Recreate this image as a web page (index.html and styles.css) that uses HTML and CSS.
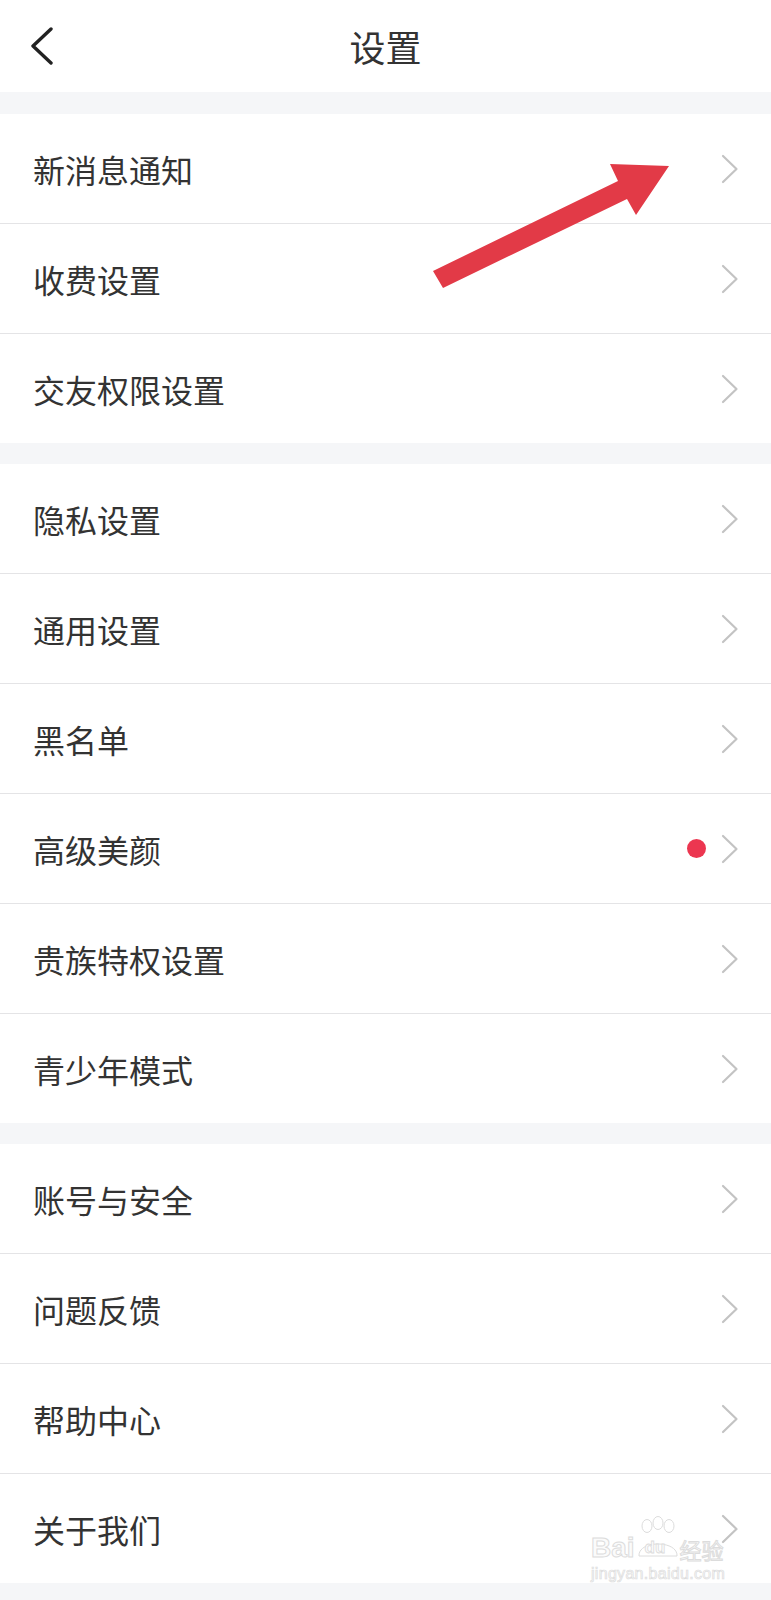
FILE: index.html
```html
<!DOCTYPE html>
<html lang="zh-CN">
<head>
<meta charset="utf-8">
<title>设置</title>
<link rel="stylesheet" href="styles.css">
</head>
<body>
<div class="page">
  <header class="nav">
    <div class="nav-left">
      <svg class="back" width="24" height="38" viewBox="0 0 24 38"><polyline points="21,2 3,19 21,36" fill="none" stroke="#222" stroke-width="3.4" stroke-linecap="round" stroke-linejoin="round"/></svg>
    </div>
    <h1 class="title">设置</h1>
    <div class="nav-right"></div>
  </header>

  <ul class="group first">
    <li class="row"><span class="label">新消息通知</span><span class="right"><svg class="chev" width="18" height="30" viewBox="0 0 18 30"><polyline points="2,2 15.5,15 2,28" fill="none" stroke="#c3c3c3" stroke-width="2.2" stroke-linecap="round" stroke-linejoin="round"/></svg></span></li>
    <li class="row"><span class="label">收费设置</span><span class="right"><svg class="chev" width="18" height="30" viewBox="0 0 18 30"><polyline points="2,2 15.5,15 2,28" fill="none" stroke="#c3c3c3" stroke-width="2.2" stroke-linecap="round" stroke-linejoin="round"/></svg></span></li>
    <li class="row"><span class="label">交友权限设置</span><span class="right"><svg class="chev" width="18" height="30" viewBox="0 0 18 30"><polyline points="2,2 15.5,15 2,28" fill="none" stroke="#c3c3c3" stroke-width="2.2" stroke-linecap="round" stroke-linejoin="round"/></svg></span></li>
  </ul>

  <ul class="group">
    <li class="row"><span class="label">隐私设置</span><span class="right"><svg class="chev" width="18" height="30" viewBox="0 0 18 30"><polyline points="2,2 15.5,15 2,28" fill="none" stroke="#c3c3c3" stroke-width="2.2" stroke-linecap="round" stroke-linejoin="round"/></svg></span></li>
    <li class="row"><span class="label">通用设置</span><span class="right"><svg class="chev" width="18" height="30" viewBox="0 0 18 30"><polyline points="2,2 15.5,15 2,28" fill="none" stroke="#c3c3c3" stroke-width="2.2" stroke-linecap="round" stroke-linejoin="round"/></svg></span></li>
    <li class="row"><span class="label">黑名单</span><span class="right"><svg class="chev" width="18" height="30" viewBox="0 0 18 30"><polyline points="2,2 15.5,15 2,28" fill="none" stroke="#c3c3c3" stroke-width="2.2" stroke-linecap="round" stroke-linejoin="round"/></svg></span></li>
    <li class="row"><span class="label">高级美颜</span><span class="right"><span class="dot"></span><svg class="chev" width="18" height="30" viewBox="0 0 18 30"><polyline points="2,2 15.5,15 2,28" fill="none" stroke="#c3c3c3" stroke-width="2.2" stroke-linecap="round" stroke-linejoin="round"/></svg></span></li>
    <li class="row"><span class="label">贵族特权设置</span><span class="right"><svg class="chev" width="18" height="30" viewBox="0 0 18 30"><polyline points="2,2 15.5,15 2,28" fill="none" stroke="#c3c3c3" stroke-width="2.2" stroke-linecap="round" stroke-linejoin="round"/></svg></span></li>
    <li class="row"><span class="label">青少年模式</span><span class="right"><svg class="chev" width="18" height="30" viewBox="0 0 18 30"><polyline points="2,2 15.5,15 2,28" fill="none" stroke="#c3c3c3" stroke-width="2.2" stroke-linecap="round" stroke-linejoin="round"/></svg></span></li>
  </ul>

  <ul class="group">
    <li class="row"><span class="label">账号与安全</span><span class="right"><svg class="chev" width="18" height="30" viewBox="0 0 18 30"><polyline points="2,2 15.5,15 2,28" fill="none" stroke="#c3c3c3" stroke-width="2.2" stroke-linecap="round" stroke-linejoin="round"/></svg></span></li>
    <li class="row"><span class="label">问题反馈</span><span class="right"><svg class="chev" width="18" height="30" viewBox="0 0 18 30"><polyline points="2,2 15.5,15 2,28" fill="none" stroke="#c3c3c3" stroke-width="2.2" stroke-linecap="round" stroke-linejoin="round"/></svg></span></li>
    <li class="row"><span class="label">帮助中心</span><span class="right"><svg class="chev" width="18" height="30" viewBox="0 0 18 30"><polyline points="2,2 15.5,15 2,28" fill="none" stroke="#c3c3c3" stroke-width="2.2" stroke-linecap="round" stroke-linejoin="round"/></svg></span></li>
    <li class="row"><span class="label">关于我们</span><span class="right"><svg class="chev" width="18" height="30" viewBox="0 0 18 30"><polyline points="2,2 15.5,15 2,28" fill="none" stroke="#c3c3c3" stroke-width="2.2" stroke-linecap="round" stroke-linejoin="round"/></svg></span></li>
  </ul>

  <svg class="annot" width="771" height="300" viewBox="0 0 771 300">
    <polygon points="443,288 433,271 618,181 610,164 669,166 636,215 627,199" fill="#e23a47"/>
  </svg>

  <div class="watermark">
    <div class="wm-top"><span class="wm-bai">Bai</span><span class="wm-paw"><svg width="44" height="42" viewBox="0 0 44 42"><ellipse cx="11" cy="10" rx="5" ry="6.5" fill="none" stroke="#dcdcdc" stroke-width="1"/><ellipse cx="22" cy="7" rx="5" ry="6.5" fill="none" stroke="#dcdcdc" stroke-width="1"/><ellipse cx="33" cy="10" rx="5" ry="6.5" fill="none" stroke="#dcdcdc" stroke-width="1"/><path d="M3 40 C2 24 42 24 41 40 Z" fill="none" stroke="#dcdcdc" stroke-width="1"/></svg><span class="wm-du">du</span></span><span class="wm-jy">经验</span></div>
    <div class="wm-url">jingyan.baidu.com</div>
  </div>
</div>
</body>
</html>
```

FILE: styles.css
```css
* { box-sizing: border-box; }

html, body {
  margin: 0;
  padding: 0;
}

body {
  background: #f5f6f8;
  font-family: "Noto Sans CJK SC", "Noto Sans", sans-serif;
  color: #333333;
}

.page {
  position: relative;
  width: 771px;
  min-height: 1600px;
  background: #f5f6f8;
  overflow: hidden;
}

.nav {
  height: 92px;
  background: #ffffff;
  display: grid;
  grid-template-columns: 1fr auto 1fr;
  align-items: center;
}

.nav-left {
  display: flex;
  align-items: center;
  padding-left: 30px;
}

.back { display: block; }

.title {
  margin: 0;
  font-size: 36px;
  font-weight: 400;
  color: #333333;
  line-height: 1;
  letter-spacing: 0;
}

.group {
  list-style: none;
  margin: 21px 0 0;
  padding: 0;
  background: #ffffff;
}

.group.first { margin-top: 22px; }

.row {
  height: 110px;
  display: flex;
  align-items: center;
  justify-content: space-between;
  padding: 0 32px 0 33px;
  border-bottom: 1px solid #e4e4e6;
}

.row:last-child {
  height: 109px;
  border-bottom: none;
}

.label {
  font-size: 32px;
  line-height: 1;
  color: #333333;
}

.right {
  display: flex;
  align-items: center;
  gap: 15px;
}

.chev { display: block; }

.dot {
  width: 19px;
  height: 19px;
  border-radius: 50%;
  background: #ec3650;
}

.annot {
  position: absolute;
  left: 0;
  top: 0;
  pointer-events: none;
}

.watermark {
  position: absolute;
  left: 591px;
  top: 1516px;
  font-family: "Liberation Sans", sans-serif;
  white-space: nowrap;
  pointer-events: none;
}

.wm-top {
  display: flex;
  align-items: flex-end;
  height: 42px;
}

.wm-bai {
  font-size: 28px;
  font-weight: 700;
  line-height: 1;
  color: #fbfbfb;
  -webkit-text-stroke: 1px #dcdcdc;
  margin-bottom: -4px;
}

.wm-paw {
  position: relative;
  display: block;
  width: 44px;
  height: 42px;
  margin-left: 1px;
}

.wm-paw svg { display: block; }

.wm-du {
  position: absolute;
  left: 9px;
  bottom: 2px;
  font-size: 17px;
  font-weight: 700;
  line-height: 1;
  color: #fbfbfb;
  -webkit-text-stroke: 0.8px #dcdcdc;
}

.wm-jy {
  font-family: "Noto Sans CJK SC", sans-serif;
  font-size: 22px;
  line-height: 1;
  margin-left: 0;
  margin-bottom: -2px;
  color: #fbfbfb;
  -webkit-text-stroke: 1px #dcdcdc;
}

.wm-url {
  font-size: 16px;
  line-height: 1;
  margin-top: 8px;
  color: #fbfbfb;
  -webkit-text-stroke: 0.7px #dcdcdc;
  letter-spacing: 0.3px;
}
```
